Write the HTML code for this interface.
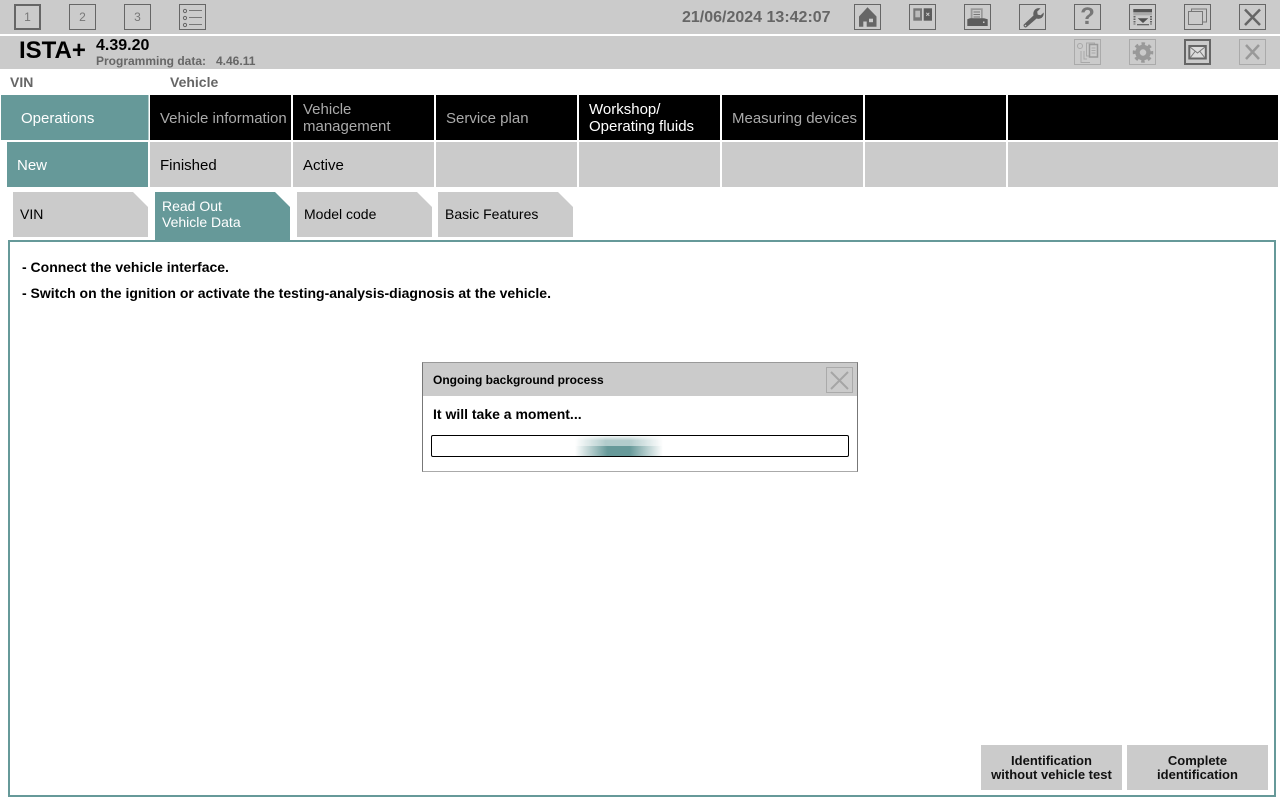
<!DOCTYPE html>
<html><head><meta charset="utf-8">
<style>
html,body{margin:0;padding:0;background:#fff}
body{position:relative;width:1280px;height:800px;overflow:hidden;font-family:"Liberation Sans",sans-serif;color:#000}
.a{position:absolute;box-sizing:border-box}
.t{position:absolute;white-space:nowrap}
.ib{position:absolute;width:27px;height:26px;box-sizing:border-box;border:1px solid #666;color:#777;font-size:12px;text-align:center;line-height:24px}
.ib svg{position:absolute;left:-1px;top:-1px}
.nav{position:absolute;top:95px;height:45px;width:141px;background:#000;color:#aaa;font-size:15px;line-height:17px;padding-left:10px;padding-top:2px;box-sizing:border-box;display:flex;align-items:center}
.sub{position:absolute;top:142px;height:45px;width:141px;background:#cbcbcb;font-size:15px;padding-left:10px;box-sizing:border-box;line-height:47px}
.tab{position:absolute;top:192px;width:135px;height:45px;background:#cbcbcb;font-size:14px;line-height:16px;box-sizing:border-box;padding-left:7px;padding-bottom:2px;display:flex;align-items:center;clip-path:polygon(0 0,120px 0,135px 15px,135px 100%,0 100%)}
.btn{position:absolute;top:745px;width:141px;height:45px;background:#cbcbcb;font-size:13px;font-weight:bold;line-height:14px;text-align:center;padding-top:9px;box-sizing:border-box;color:#111}
</style></head><body>
<div class="a" style="left:0;top:0;width:1280px;height:34px;background:#cbcbcb"></div>
<div class="a" style="left:0;top:36px;width:1280px;height:33px;background:#cbcbcb"></div>

<div class="ib" style="left:14px;top:4px;border:2px solid #666;line-height:22px">1</div>
<div class="ib" style="left:69px;top:4px">2</div>
<div class="ib" style="left:124px;top:4px">3</div>
<div class="ib" style="left:179px;top:4px"><svg width="27" height="26" fill="none" stroke="#666"><circle cx="6" cy="7" r="1.600"/><circle cx="6" cy="14" r="1.600"/><circle cx="6" cy="21" r="1.600"/><path d="M10 6.500h13M10 13.500h13M10 20.500h13" stroke="#777"/></svg></div>

<div class="t" style="left:682px;top:9px;font-size:16px;font-weight:bold;color:#666">21/06/2024 13:42:07</div>

<div class="ib" style="left:854px;top:4px"><svg width="27" height="26"><path d="M13.500 3.300L5 12.500V22.700h4.300V17.500h3.400v5.200H22.500V12.500z" fill="#666"/><rect x="15" y="14.700" width="4" height="3.500" fill="#cbcbcb"/></svg></div>
<div class="ib" style="left:909px;top:4px"><svg width="27" height="26"><rect x="4.300" y="4.300" width="8.700" height="12.400" fill="#777"/><rect x="6.300" y="6.700" width="4.700" height="6.600" fill="#bbb"/><rect x="14.700" y="4.300" width="8.300" height="12.400" fill="#5c5c5c"/><path d="M17.300 8.800l3 3m0-3l-3 3" stroke="#ccc" fill="none"/></svg></div>
<div class="ib" style="left:964px;top:4px"><svg width="27" height="26"><rect x="6.700" y="4.300" width="12" height="11.700" fill="#9a9a9a"/><rect x="8.500" y="6" width="8.500" height="10" fill="#c8c8c8"/><path d="M9.500 8h6.500M9.500 10.500h6.500M9.500 13h6.500" stroke="#777"/><path d="M6 14.300h14l3.700 1V22H3.300v-6.700z" fill="#5c5c5c"/><rect x="19" y="17.500" width="1.500" height="1.500" fill="#ccc"/></svg></div>
<div class="ib" style="left:1019px;top:4px"><svg width="27" height="26"><path d="M4.800 20.500L14.500 11.500c-.6-2.800.3-5.500 2.700-6.800 1.500-.7 3-.7 4.300-.3l-3.300 3.200.5 3 3 .7 3-2.800c.3 2.500-.7 4.700-2.800 5.800-1.500.7-3 .7-4.300.2L7.500 23.300c-1.500 1-3.800-1.300-2.700-2.800z" fill="#606060"/><circle cx="6.500" cy="21.500" r=".8" fill="#ccc"/></svg></div>
<div class="ib" style="left:1074px;top:4px;font-size:24px;font-weight:bold;color:#777">?</div>
<div class="ib" style="left:1129px;top:4px"><svg width="27" height="26"><rect x="4.300" y="5" width="18.700" height="3.300" fill="#555"/><rect x="4.300" y="8.300" width="18.700" height="3" fill="#aaa"/><path d="M8.700 14.300h10.600L14 19z" fill="#505050"/><path d="M5.500 12v8.500M22 12v8.500" stroke="#666" stroke-width="2" stroke-dasharray="1.500 1" fill="none"/><rect x="8" y="20" width="12" height="1.300" fill="#666"/></svg></div>
<div class="ib" style="left:1184px;top:4px"><svg width="27" height="26" fill="none" stroke="#777"><path d="M7.500 7V5h15v13h-4"/><rect x="4.500" y="7.500" width="14" height="13"/></svg></div>
<div class="ib" style="left:1239px;top:4px"><svg width="27" height="26" fill="none" stroke="#666" stroke-width="2.500"><path d="M6 5.500l15 15.500M21 5.500L6 21"/></svg></div>

<div class="t" style="left:19px;top:37px;font-size:24px;font-weight:bold;line-height:28px">ISTA+</div>
<div class="t" style="left:96px;top:37px;font-size:16px;font-weight:bold;line-height:18px">4.39.20</div>
<div class="t" style="left:96px;top:54px;font-size:12px;font-weight:bold;color:#666;line-height:14px">Programming data:</div>
<div class="t" style="left:216px;top:54px;font-size:12px;font-weight:bold;color:#666;line-height:14px">4.46.11</div>

<div class="ib" style="left:1074px;top:39px;border-color:#aaa"><svg width="27" height="26" fill="none" stroke="#a8a8a8"><circle cx="6" cy="7" r="2.500"/><path d="M7 12v11.500h9M10 12v8h3"/><rect x="12.500" y="4" width="8" height="13" fill="#cbcbcb"/><rect x="15.500" y="5.500" width="8" height="12.500" fill="#cbcbcb" stroke="#999" stroke-width="1.500"/><path d="M17.500 9h4M17.500 11.500h4M17.500 14h4" stroke="#aaa"/></svg></div>
<div class="ib" style="left:1129px;top:39px;border-color:#aaa"><svg width="27" height="26" fill="none" stroke="#999"><circle cx="14" cy="13.500" r="5.500" stroke-width="4.500"/><circle cx="14" cy="13.500" r="8.500" stroke-width="3.500" stroke-dasharray="3.400 3.275" stroke-dashoffset="1.700"/></svg></div>
<div class="ib" style="left:1184px;top:39px;border:2px solid #666"><svg width="27" height="26" style="left:-2px;top:-2px" fill="none"><rect x="5.300" y="7" width="16.500" height="12.500" fill="#dcdcdc" stroke="#666" stroke-width="2"/><path d="M6 8l7.500 6 7.500-6M6 19l5-6.500M21 19l-5-6.500" stroke="#777"/></svg></div>
<div class="ib" style="left:1239px;top:39px;border-color:#aaa"><svg width="27" height="26" fill="none" stroke="#999" stroke-width="2.500"><path d="M7 6l13 14M20 6L7 20"/></svg></div>

<div class="t" style="left:10px;top:75px;font-size:14px;font-weight:bold;color:#666;line-height:15px">VIN</div>
<div class="t" style="left:170px;top:75px;font-size:14px;font-weight:bold;color:#666;line-height:15px">Vehicle</div>

<div class="nav" style="left:1px;width:148px;background:#669999;color:#fff;padding-left:20px;border-right:1px solid #b3cccc">Operations</div>
<div class="nav" style="left:150px">Vehicle information</div>
<div class="nav" style="left:293px;padding-top:0">Vehicle<br>management</div>
<div class="nav" style="left:436px">Service plan</div>
<div class="nav" style="left:579px;color:#fff;padding-top:0">Workshop/<br>Operating fluids</div>
<div class="nav" style="left:722px">Measuring devices</div>
<div class="nav" style="left:865px"></div>
<div class="nav" style="left:1008px;width:270px"></div>

<div class="sub" style="left:7px;background:#669999;color:#fff">New</div>
<div class="sub" style="left:150px">Finished</div>
<div class="sub" style="left:293px">Active</div>
<div class="sub" style="left:436px"></div>
<div class="sub" style="left:579px"></div>
<div class="sub" style="left:722px"></div>
<div class="sub" style="left:865px"></div>
<div class="sub" style="left:1008px;width:270px"></div>

<div class="tab" style="left:13px">VIN</div>
<div class="tab" style="left:155px;height:48px;background:#669999;color:#fff;padding-bottom:5px">Read Out<br>Vehicle Data</div>
<div class="tab" style="left:297px">Model code</div>
<div class="tab" style="left:438px">Basic Features</div>

<div class="a" style="left:8px;top:240px;width:1268px;height:557px;border:2px solid #669999"></div>
<div class="t" style="left:22px;top:259px;font-size:14px;font-weight:bold;line-height:16px">- Connect the vehicle interface.</div>
<div class="t" style="left:22px;top:285px;font-size:14px;font-weight:bold;line-height:16px">- Switch on the ignition or activate the testing-analysis-diagnosis at the vehicle.</div>

<div class="a" style="left:422px;top:362px;width:436px;height:110px;border:1px solid;border-color:#999 #777 #aaa #777;background:#fff">
  <div class="a" style="left:0;top:0;width:434px;height:33px;background:#cbcbcb"></div>
  <div class="t" style="left:10px;top:10px;font-size:12px;font-weight:bold;line-height:14px">Ongoing background process</div>
  <div class="ib" style="left:403px;top:4px;border-color:#aaa"><svg width="27" height="26" fill="none" stroke="#a5a5a5" stroke-width="2"><path d="M5 5l17 17M22 5L5 22"/></svg></div>
  <div class="t" style="left:10px;top:43px;font-size:14px;font-weight:bold;line-height:16px">It will take a moment...</div>
  <div class="a" style="left:8px;top:72px;width:418px;height:22px;border:1px solid #000;border-radius:2px;overflow:hidden;background:#fff">
    <div class="a" style="left:143px;top:0;width:88px;height:10px;background:linear-gradient(90deg,rgba(102,153,153,0),rgba(102,153,153,.5) 35%,rgba(102,153,153,.5) 62%,rgba(102,153,153,0));-webkit-mask-image:linear-gradient(rgba(0,0,0,.15),#000 45%,#000)"></div>
    <div class="a" style="left:143px;top:10px;width:88px;height:10px;background:linear-gradient(90deg,rgba(102,153,153,0),#669999 37%,#669999 62%,rgba(102,153,153,0))"></div>
  </div>
</div>

<div class="btn" style="left:981px">Identification<br>without vehicle test</div>
<div class="btn" style="left:1127px">Complete<br>identification</div>
</body></html>
